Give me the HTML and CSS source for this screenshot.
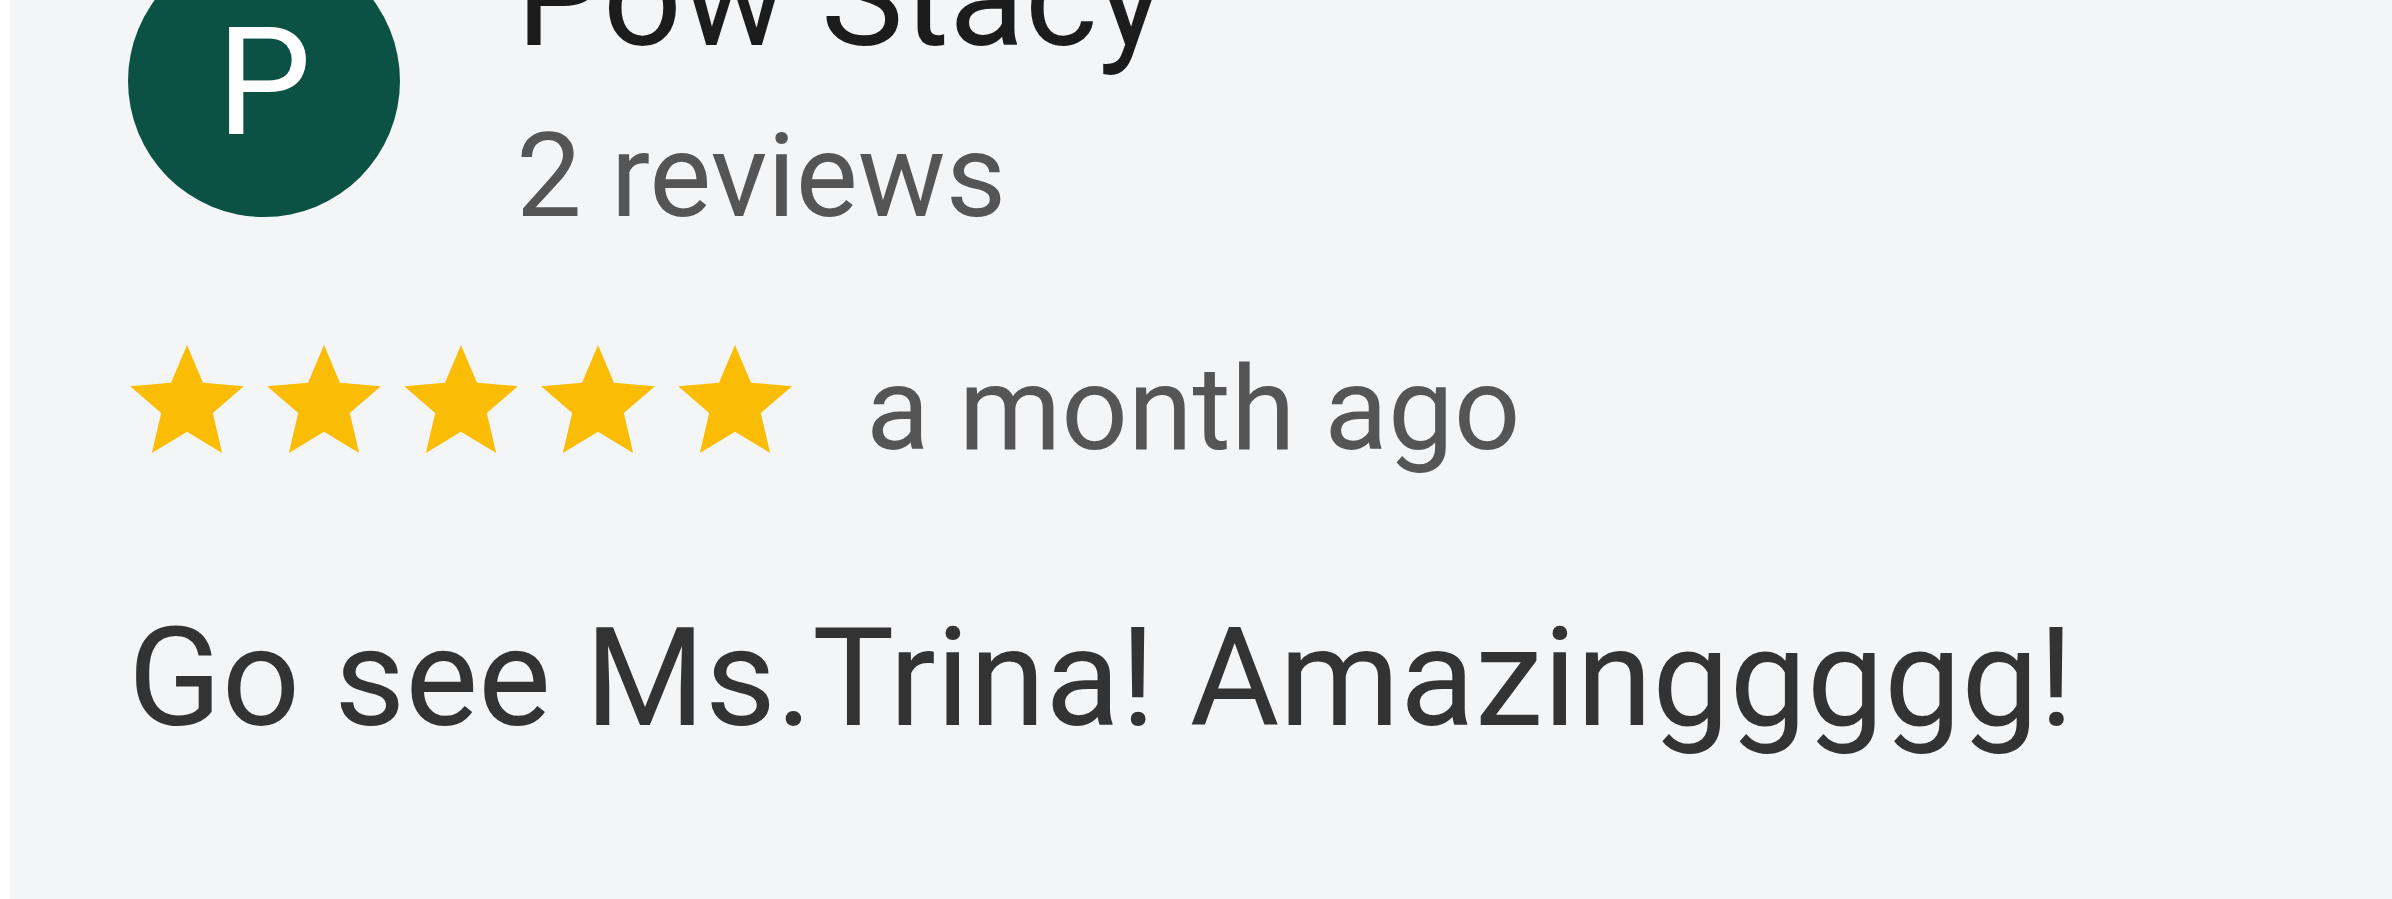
FILE: index.html
```html
<!DOCTYPE html>
<html lang="en">
<head>
  <meta charset="UTF-8" />
  <meta name="viewport" content="width=device-width, initial-scale=1.0"/>
  <title>Review</title>
  <link rel="stylesheet" href="styles.css">
</head>
<body>

<div class="review">
  <div class="head">
    <div class="avatar">P</div>
    <div class="who">
      <div class="name">Pow Stacy</div>
      <div class="count">2 reviews</div>
    </div>
  </div>

  <div class="rating">
    <div class="stars">
      <svg class="star" viewBox="2 2 20 19"><path d="M12 17.27L18.18 21l-1.64-7.03L22 9.24l-7.19-.61L12 2 9.19 8.63 2 9.24l5.46 4.73L5.82 21z"/></svg>
      <svg class="star" viewBox="2 2 20 19"><path d="M12 17.27L18.18 21l-1.64-7.03L22 9.24l-7.19-.61L12 2 9.19 8.63 2 9.24l5.46 4.73L5.82 21z"/></svg>
      <svg class="star" viewBox="2 2 20 19"><path d="M12 17.27L18.18 21l-1.64-7.03L22 9.24l-7.19-.61L12 2 9.19 8.63 2 9.24l5.46 4.73L5.82 21z"/></svg>
      <svg class="star" viewBox="2 2 20 19"><path d="M12 17.27L18.18 21l-1.64-7.03L22 9.24l-7.19-.61L12 2 9.19 8.63 2 9.24l5.46 4.73L5.82 21z"/></svg>
      <svg class="star" viewBox="2 2 20 19"><path d="M12 17.27L18.18 21l-1.64-7.03L22 9.24l-7.19-.61L12 2 9.19 8.63 2 9.24l5.46 4.73L5.82 21z"/></svg>
    </div>
    <span class="when">a month ago</span>
  </div>

  <p class="text">Go see Ms.Trina! Amazinggggg!</p>
</div>

</body>
</html>
```

FILE: styles.css
```css
body {
  margin: 0;
  background: #fff;
  font-family: Roboto, "Noto Sans", sans-serif;
  overflow: hidden;
}
.review {
  margin-left: 10px;
  height: 100vh;
  background: #f4f5f7;
  padding-left: 118px;
  overflow: hidden;
}
.head {
  display: flex;
  gap: 116px;
  margin-top: -55px;
}
.avatar {
  width: 272px;
  height: 272px;
  flex: none;
  border-radius: 50%;
  background: #0b5244;
  color: #fff;
  font-size: 150px;
  line-height: 1;
  display: flex;
  align-items: center;
  justify-content: center;
  padding-top: 4px;
  box-sizing: border-box;
}
.who {
  margin-top: -17px;
}
.name {
  font-size: 139px;
  line-height: 1;
  color: #1c1c1c;
}
.count {
  margin-top: 51px;
  font-size: 117px;
  line-height: 1;
  color: #555;
}
.rating {
  display: flex;
  align-items: flex-start;
  margin-top: 110px;
}
.stars {
  display: flex;
  gap: 23px;
  margin-left: 2px;
}
.star {
  width: 114px;
  height: 108px;
  fill: #fbbc04;
}
.when {
  margin-left: 74px;
  margin-top: 6px;
  font-size: 117px;
  line-height: 1;
  color: #555;
}
.text {
  margin: 142px 0 0;
  font-size: 137.5px;
  line-height: 1;
  color: #333;
}
```
